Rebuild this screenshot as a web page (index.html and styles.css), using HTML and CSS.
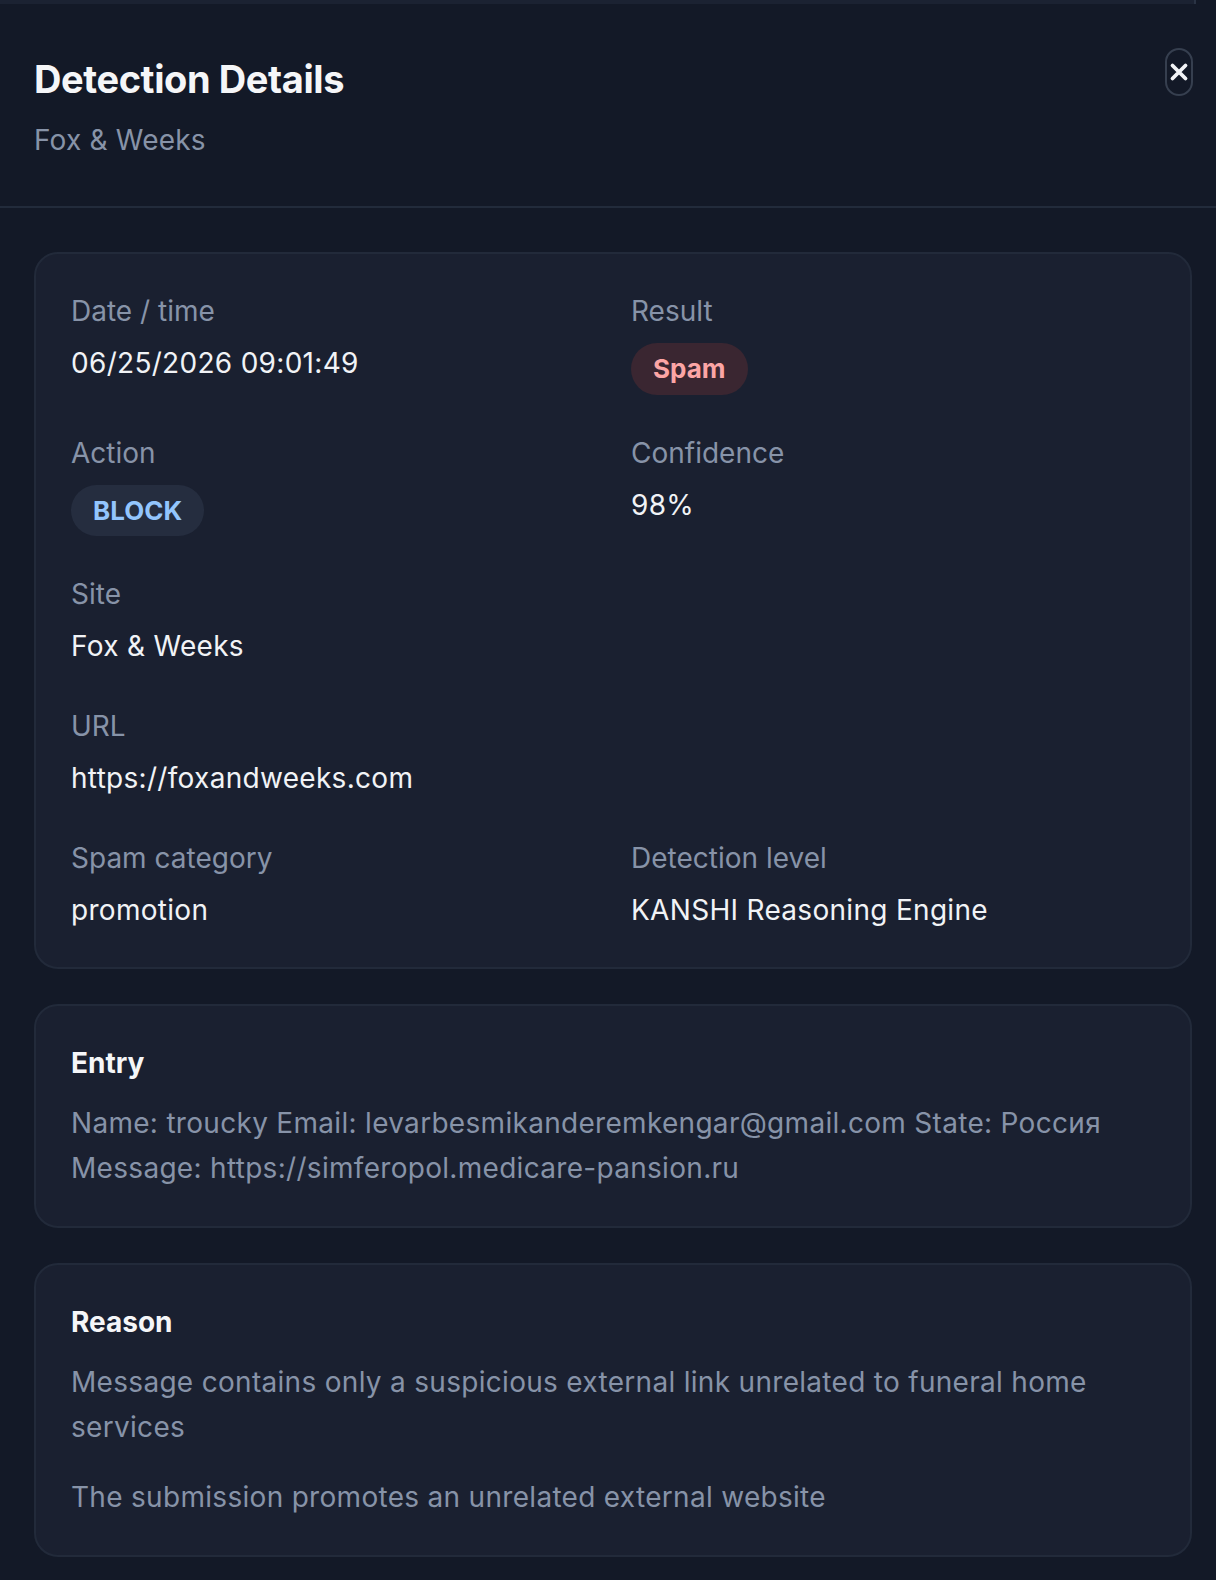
FILE: index.html
```html
<!DOCTYPE html>
<html lang="en">
<head>
    <meta charset="UTF-8">
    <title>Detection Details</title>
    <link rel="stylesheet" href="styles.css">
</head>
<body>
<div class="page-strip"></div>
<div class="modal">
    <header class="modal-head">
        <div class="modal-titles">
            <h1 class="modal-title">Detection Details</h1>
            <p class="modal-sub">Fox &amp; Weeks</p>
        </div>
        <button class="close-btn" type="button" aria-label="Close">
            <svg width="20" height="20" viewBox="0 0 20 20">
                <path d="M3.5 3.5 L16.5 16.5 M16.5 3.5 L3.5 16.5" stroke="#f1f3f6" stroke-width="3.8" stroke-linecap="round" fill="none"/>
            </svg>
        </button>
    </header>

    <div class="modal-body">
        <section class="card">
            <dl class="detail-grid">
                <div class="field">
                    <dt>Date / time</dt>
                    <dd>06/25/2026 09:01:49</dd>
                </div>
                <div class="field">
                    <dt>Result</dt>
                    <dd><span class="pill pill-spam">Spam</span></dd>
                </div>
                <div class="field">
                    <dt>Action</dt>
                    <dd><span class="pill pill-block">BLOCK</span></dd>
                </div>
                <div class="field">
                    <dt>Confidence</dt>
                    <dd>98%</dd>
                </div>
                <div class="field field-wide">
                    <dt>Site</dt>
                    <dd>Fox &amp; Weeks</dd>
                </div>
                <div class="field field-wide">
                    <dt>URL</dt>
                    <dd>https://foxandweeks.com</dd>
                </div>
                <div class="field">
                    <dt>Spam category</dt>
                    <dd>promotion</dd>
                </div>
                <div class="field">
                    <dt>Detection level</dt>
                    <dd>KANSHI Reasoning Engine</dd>
                </div>
            </dl>
        </section>

        <section class="card">
            <h2 class="card-title">Entry</h2>
            <p class="card-text">Name: troucky Email: levarbesmikanderemkengar@gmail.com State: Россия Message: https://simferopol.medicare-pansion.ru</p>
        </section>

        <section class="card">
            <h2 class="card-title">Reason</h2>
            <p class="card-text">Message contains only a suspicious external link unrelated to funeral home services</p>
            <p class="card-text">The submission promotes an unrelated external website</p>
        </section>
    </div>
</div>
</body>
</html>
```

FILE: styles.css
```css
*{
    box-sizing: border-box;
}
body{
    margin: 0;
    background-color: #131927;
    font-family: Inter, "Noto Sans", sans-serif;
    color: #f1f3f6;
}
/* sliver of the page behind the modal */
.page-strip{
    width: 1196px;
    height: 4px;
    background-color: #1b2232;
    border-right: 2px solid #2a3344;
}
.modal-head{
    display: flex;
    justify-content: space-between;
    align-items: flex-start;
    padding: 44px 23px 44px 34px;
    border-bottom: 2px solid #222b3b;
}
.modal-titles{
    padding-top: 8px;
}
.modal-title{
    margin: 0;
    font-size: 38px;
    line-height: 46px;
    font-weight: 700;
    letter-spacing: -0.4px;
    color: #f5f6f8;
}
.modal-sub{
    margin: 16px 0 0;
    font-size: 28px;
    line-height: 44px;
    letter-spacing: 0.2px;
    color: #8793a8;
}
.close-btn{
    width: 28px;
    height: 48px;
    padding: 0;
    display: flex;
    align-items: center;
    justify-content: center;
    background: transparent;
    border: 2px solid #363f4f;
    border-radius: 14px;
}
.modal-body{
    display: flex;
    flex-direction: column;
    gap: 35px;
    padding: 44px 24px 24px 34px;
}
.card{
    background-color: #1a2030;
    border: 2px solid #222a3a;
    border-radius: 24px;
    padding: 35px 35px 35px;
}
.detail-grid{
    margin: 0;
    display: grid;
    grid-template-columns: 1fr 1fr;
    column-gap: 36px;
    row-gap: 36px;
}
.field-wide{
    grid-column: 1 / -1;
}
.field dt{
    font-size: 28px;
    line-height: 44px;
    color: #8793a8;
}
.field dd{
    margin: 8px 0 0;
    font-size: 28px;
    line-height: 44px;
    letter-spacing: 0.3px;
    color: #f1f3f6;
}
.pill{
    display: inline-flex;
    align-items: center;
    vertical-align: top;
    margin-top: 2px;
    height: 52px;
    padding: 0 22px;
    border-radius: 26px;
    font-size: 26px;
    font-weight: 700;
    letter-spacing: 0;
}
.pill-spam{
    background-color: #3a2631;
    color: #fca5a5;
}
.pill-block{
    height: 51px;
    background-color: #252d3f;
    color: #93c5fd;
}
.card-title{
    margin: 0;
    font-size: 28px;
    line-height: 44px;
    font-weight: 700;
    color: #f5f6f8;
}
.card-text{
    margin: 16px 0 0;
    font-size: 28px;
    line-height: 45px;
    letter-spacing: 0.3px;
    color: #8793a8;
}
.card-text + .card-text{
    margin-top: 25px;
}
```
